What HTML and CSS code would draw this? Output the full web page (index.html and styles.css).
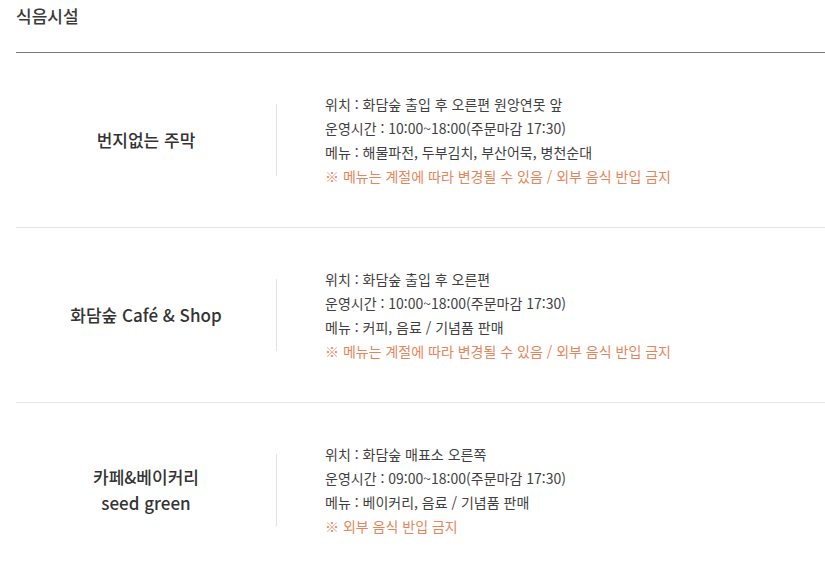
FILE: index.html
```html
<!DOCTYPE html>
<html lang="ko">
<head>
<meta charset="utf-8">
<link rel="stylesheet" href="styles.css">
</head>
<body>
<div class="page">
  <h2 class="title">식음시설</h2>
  <ul class="list">
    <li class="row">
      <div class="name">번지없는 주막</div>
      <div class="divider"></div>
      <div class="info">
        <p>위치 : 화담숲 출입 후 오른편 원앙연못 앞</p>
        <p>운영시간 : 10:00~18:00(주문마감 17:30)</p>
        <p>메뉴 : 해물파전, 두부김치, 부산어묵, 병천순대</p>
        <p class="note">※ 메뉴는 계절에 따라 변경될 수 있음 / 외부 음식 반입 금지</p>
      </div>
    </li>
    <li class="row">
      <div class="name">화담숲 Café &amp; Shop</div>
      <div class="divider"></div>
      <div class="info">
        <p>위치 : 화담숲 출입 후 오른편</p>
        <p>운영시간 : 10:00~18:00(주문마감 17:30)</p>
        <p>메뉴 : 커피, 음료 / 기념품 판매</p>
        <p class="note">※ 메뉴는 계절에 따라 변경될 수 있음 / 외부 음식 반입 금지</p>
      </div>
    </li>
    <li class="row">
      <div class="name">카페&amp;베이커리<br>seed green</div>
      <div class="divider"></div>
      <div class="info">
        <p>위치 : 화담숲 매표소 오른쪽</p>
        <p>운영시간 : 09:00~18:00(주문마감 17:30)</p>
        <p>메뉴 : 베이커리, 음료 / 기념품 판매</p>
        <p class="note">※ 외부 음식 반입 금지</p>
      </div>
    </li>
  </ul>
</div>
</body>
</html>
```
FILE: styles.css
```css
html, body {
  margin: 0;
  padding: 0;
  background: #fff;
}
body {
  font-family: "Noto Sans CJK KR", "Noto Sans", sans-serif;
  color: #444;
}
.page {
  padding-left: 16px;
}
.title {
  margin: 0;
  font-size: 17px;
  font-weight: 500;
  line-height: 24px;
  height: 24px;
  padding-top: 4px;
  padding-bottom: 24px;
  border-bottom: 1px solid #7a7a7a;
  color: #3a3a3a;
}
.list {
  list-style: none;
  margin: 0;
  padding: 0;
}
.row {
  display: flex;
  align-items: center;
  height: 174px;
  border-bottom: 1px solid #e6e6e6;
}
.name {
  width: 260px;
  text-align: center;
  font-size: 17px;
  font-weight: 500;
  line-height: 26px;
  color: #333;
}
.divider {
  width: 1px;
  height: 72px;
  background: #e2e2e2;
}
.info {
  padding-left: 48px;
  font-size: 14px;
  line-height: 24px;
  letter-spacing: 0;
  color: #3f3f3f;
}
.info p {
  margin: 0;
}
.info .note {
  color: #e5865a;
}
```
